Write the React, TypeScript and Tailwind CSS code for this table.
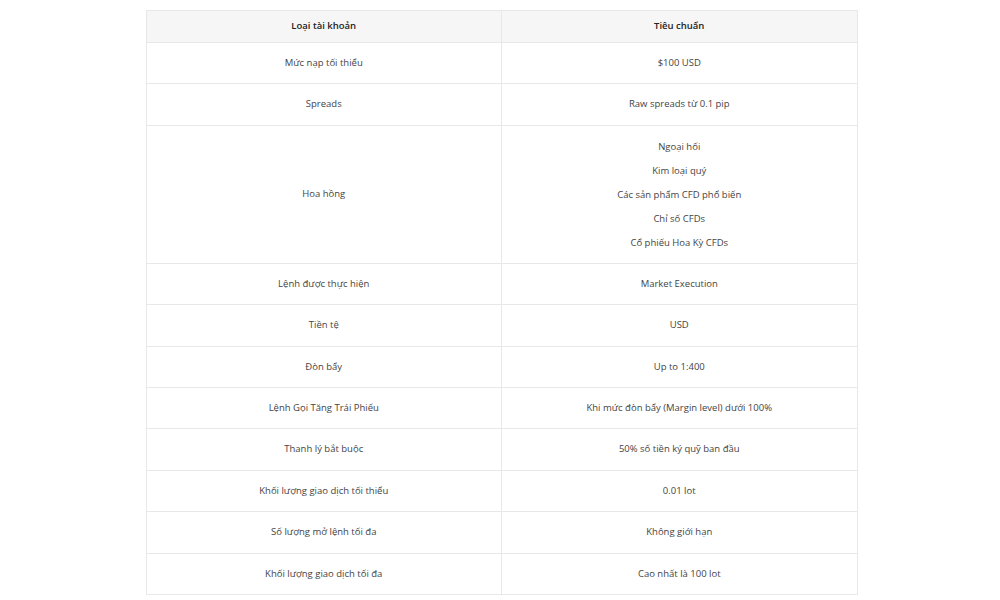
import React from "react";

const rows: { label: string; value: string | string[] }[] = [
  { label: "Mức nạp tối thiểu", value: "$100 USD" },
  { label: "Spreads", value: "Raw spreads từ 0.1 pip" },
  {
    label: "Hoa hồng",
    value: ["Ngoại hối", "Kim loại quý", "Các sản phẩm CFD phổ biến", "Chỉ số CFDs", "Cổ phiếu Hoa Kỳ CFDs"],
  },
  { label: "Lệnh được thực hiện", value: "Market Execution" },
  { label: "Tiền tệ", value: "USD" },
  { label: "Đòn bẩy", value: "Up to 1:400" },
  { label: "Lệnh Gọi Tăng Trái Phiếu", value: "Khi mức đòn bẩy (Margin level) dưới 100%" },
  { label: "Thanh lý bắt buộc", value: "50% số tiền ký quỹ ban đầu" },
  { label: "Khối lượng giao dịch tối thiểu", value: "0.01 lot" },
  { label: "Số lượng mở lệnh tối đa", value: "Không giới hạn" },
  { label: "Khối lượng giao dịch tối đa", value: "Cao nhất là 100 lot" },
];

const App = () => {
  return (
    <div className="w-full min-h-[600px] bg-white pt-[10px] pl-[3px] font-['Open_Sans',sans-serif]">
      <table className="mx-auto w-[712px] border-collapse text-center text-[9.5px] text-[#444]">
        <thead>
          <tr className="bg-[#f6f6f6]">
            <th className="w-1/2 h-[32px] border border-[#e8e8e8] font-semibold text-[#222]">Loại tài khoản</th>
            <th className="w-1/2 h-[32px] border border-[#e8e8e8] font-semibold text-[#222]">Tiêu chuẩn</th>
          </tr>
        </thead>
        <tbody>
          {rows.map((r) => (
            <tr key={r.label}>
              <td className="h-[41.4px] border border-[#e8e8e8]">{r.label}</td>
              <td className="h-[41.4px] border border-[#e8e8e8]">
                {Array.isArray(r.value) ? (
                  <div className="pt-[9px] pb-[8px] leading-6">
                    {r.value.map((v) => (
                      <div key={v}>{v}</div>
                    ))}
                  </div>
                ) : (
                  r.value
                )}
              </td>
            </tr>
          ))}
        </tbody>
      </table>
    </div>
  );
};

export default App;
